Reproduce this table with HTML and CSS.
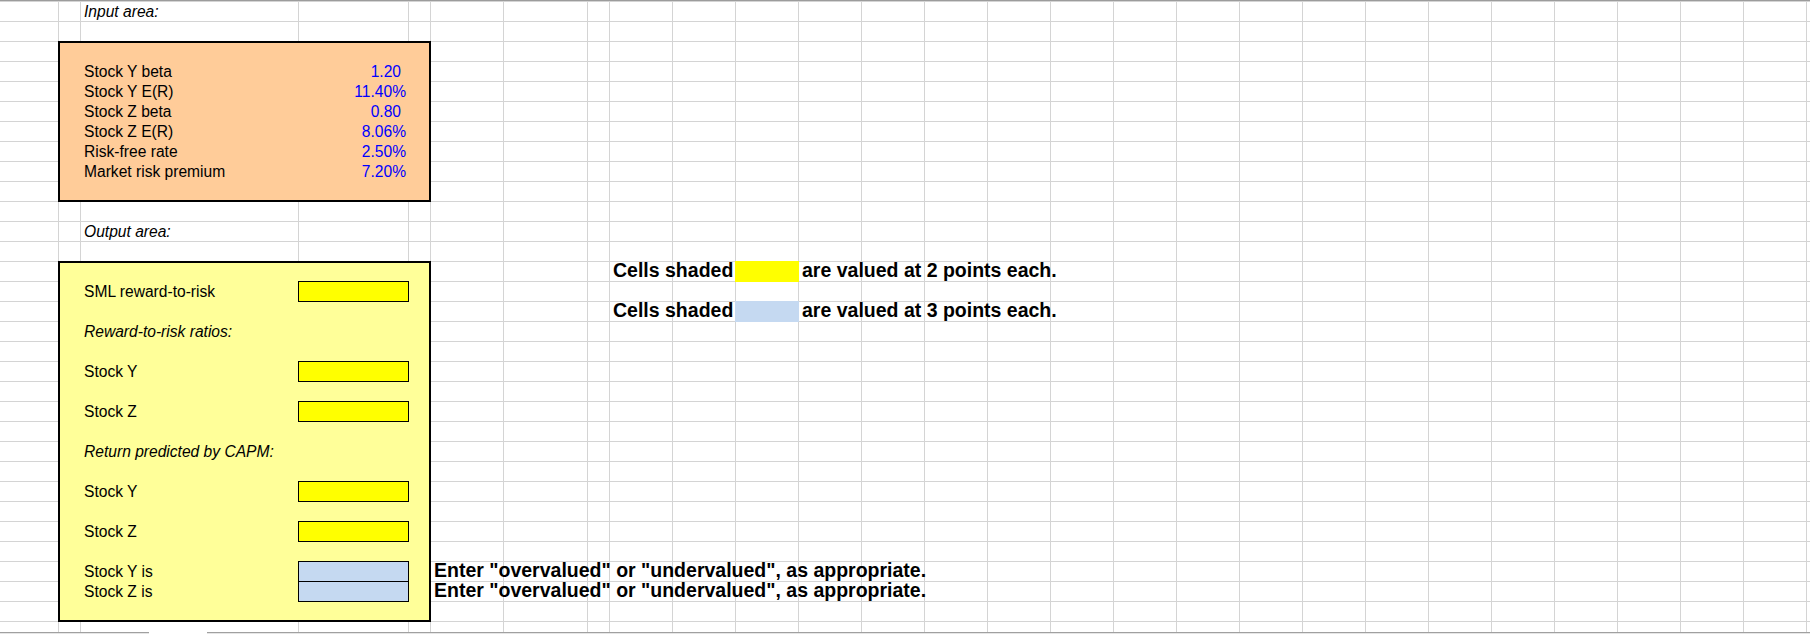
FILE: index.html
```html
<!DOCTYPE html>
<html lang="en">
<head>
<meta charset="utf-8">
<title>CAPM worksheet</title>
<link rel="stylesheet" href="styles.css">
</head>
<body>
<div class="sheet">
  <div class="lines">
    <div></div><div></div><div></div><div></div><div></div><div></div><div></div>
    <div></div><div></div><div></div><div></div><div></div><div></div><div></div>
    <div></div><div></div><div></div><div></div><div></div><div></div><div></div>
    <div></div><div></div><div></div><div></div><div></div><div></div><div></div>
  </div>

  <div class="cell it title-in">Input area:</div>
  <div class="box box-in"></div>
  <div class="inputs">
    <span class="cell">Stock Y beta</span><span class="cell num pad">1.20</span>
    <span class="cell">Stock Y E(R)</span><span class="cell num">11.40%</span>
    <span class="cell">Stock Z beta</span><span class="cell num pad">0.80</span>
    <span class="cell">Stock Z E(R)</span><span class="cell num">8.06%</span>
    <span class="cell">Risk-free rate</span><span class="cell num">2.50%</span>
    <span class="cell">Market risk premium</span><span class="cell num">7.20%</span>
  </div>

  <div class="cell it title-out">Output area:</div>
  <div class="box box-out"></div>
  <div class="outputs">
    <div class="orow"><span class="cell">SML reward-to-risk</span><span class="ans yellow"></span></div>
    <div class="orow"><span class="cell it">Reward-to-risk ratios:</span></div>
    <div class="orow"><span class="cell">Stock Y</span><span class="ans yellow"></span></div>
    <div class="orow"><span class="cell">Stock Z</span><span class="ans yellow"></span></div>
    <div class="orow"><span class="cell it">Return predicted by CAPM:</span></div>
    <div class="orow"><span class="cell">Stock Y</span><span class="ans yellow"></span></div>
    <div class="orow"><span class="cell">Stock Z</span><span class="ans yellow"></span></div>
    <div class="pair">
      <div class="orow"><span class="cell">Stock Y is</span><span class="ans blue"></span><span></span><span class="cell bold">Enter "overvalued" or "undervalued", as appropriate.</span></div>
      <div class="orow"><span class="cell">Stock Z is</span><span class="ans blue"></span><span></span><span class="cell bold">Enter "overvalued" or "undervalued", as appropriate.</span></div>
    </div>
  </div>

  <div class="legend">
    <div class="lrow"><span class="cell bold">Cells shaded</span><span class="swatch yellow"></span><span class="cell bold">are valued at 2 points each.</span></div>
    <div class="lrow"><span class="cell bold">Cells shaded</span><span class="swatch blue"></span><span class="cell bold">are valued at 3 points each.</span></div>
  </div>
</div>
<div class="tabs">
  <div class="seg nav"></div>
  <div class="gap"></div>
  <div class="seg rest"></div>
</div>
</body>
</html>
```

FILE: styles.css
```css
html, body {
  margin: 0;
  padding: 0;
  width: 1810px;
  height: 634px;
  overflow: hidden;
  background: #fff;
}

body {
  font-family: "Liberation Sans", Arial, sans-serif;
  font-size: 15.6px;
  color: #000;
}

.sheet {
  --cols: 59px 22px 218px 110px 22px 73px 84px 22px repeat(19, 63px) 1fr;
  display: grid;
  grid-template-columns: var(--cols);
  grid-template-rows: repeat(31, 20px) 10px;
  border-top: 1px solid #9c9c9c;
  padding-top: 1px;
  background: linear-gradient(#d4d4d4, #d4d4d4) top left / 100% 1px no-repeat;
}

.lines {
  grid-area: 1 / 1 / -1 / -1;
  display: grid;
  grid-template-columns: var(--cols);
  background: repeating-linear-gradient(to bottom, transparent 0 19px, #d4d4d4 19px 20px);
}

.lines > div {
  border-right: 1px solid #d4d4d4;
}

.lines > div:last-child {
  border-right: 0;
}

.cell {
  display: block;
  padding-left: 3px;
  line-height: 19px;
  height: 20px;
  white-space: nowrap;
}

.it {
  font-style: italic;
}

.bold {
  font-weight: bold;
  font-size: 19.5px;
  line-height: 17px;
}

.title-in {
  grid-area: 1 / 3;
}

.title-out {
  grid-area: 12 / 3;
}

.box {
  border: 2px solid #000;
  margin: -1px 0 0 -1px;
}

.box-in {
  grid-area: 3 / 2 / 11 / 6;
  background: #ffcc99;
}

.box-out {
  grid-area: 14 / 2 / 32 / 6;
  background: #ffff99;
}

.inputs {
  grid-area: 4 / 3 / 10 / 5;
  display: grid;
  grid-template-columns: 218px 110px;
  grid-auto-rows: 20px;
}

.num {
  text-align: right;
  color: #0000ff;
  padding-right: 3px;
}

.num.pad {
  padding-right: 8px;
}

.outputs {
  grid-area: 15 / 3 / 31 / -1;
  display: flex;
  flex-direction: column;
  gap: 20px;
}

.orow {
  display: grid;
  grid-template-columns: 218px 110px 22px 1fr;
  height: 20px;
}

.ans {
  margin: -1px 0 0 -1px;
  border: 1px solid #000;
}

.yellow {
  background: #ffff00;
}

.blue {
  background: #c5d9f1;
}

.legend {
  grid-area: 14 / 9 / 17 / -1;
  display: flex;
  flex-direction: column;
  gap: 20px;
}

.lrow {
  display: grid;
  grid-template-columns: 126px 63px 1fr;
  height: 20px;
}

.swatch {
  margin: -1px 0 0 -1px;
}

.tabs {
  display: flex;
  height: 2px;
}

.seg {
  border-top: 1px solid #a0a0a0;
  background: #e6e6e6;
}

.nav {
  width: 149px;
}

.gap {
  width: 58px;
}

.rest {
  flex: 1;
}
```
